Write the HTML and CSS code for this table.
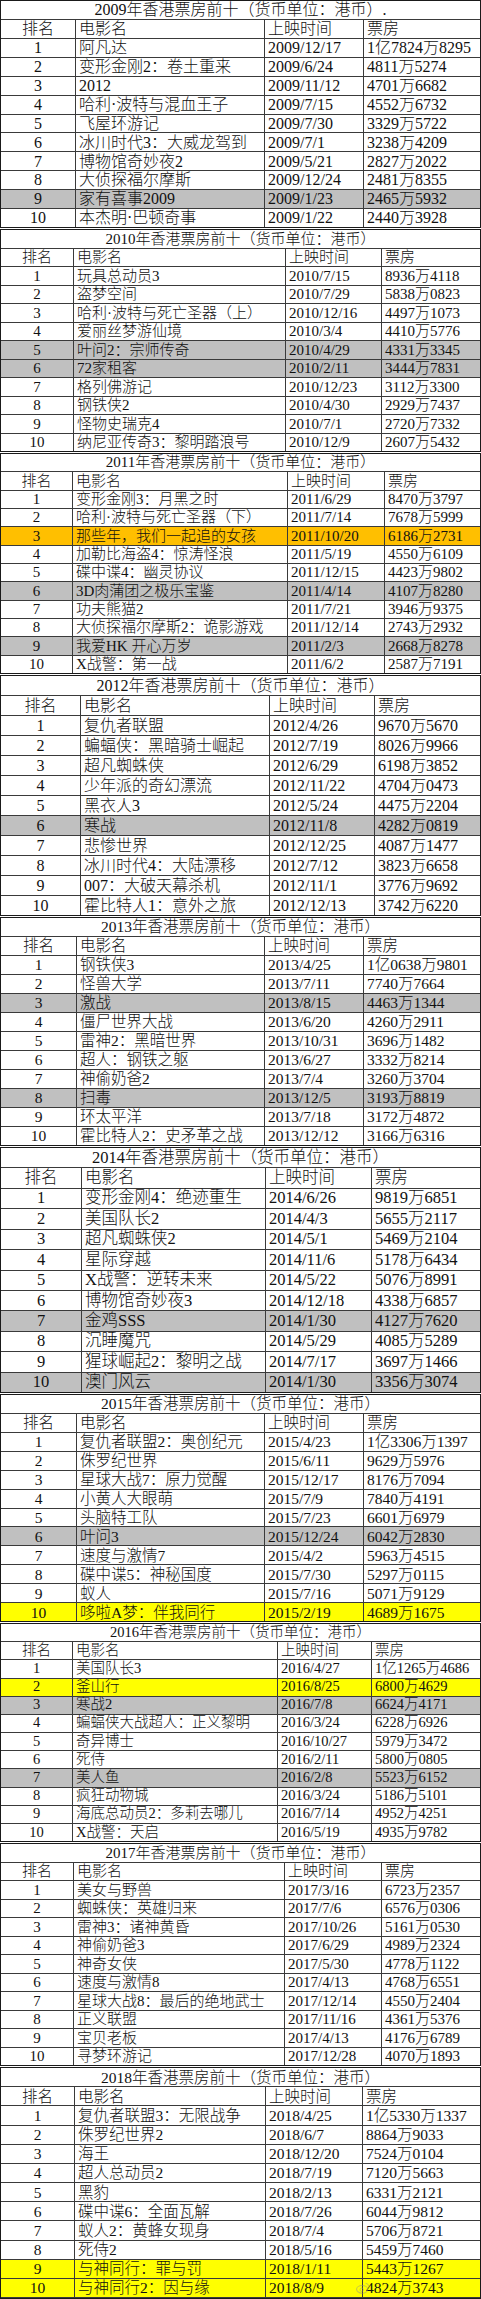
FILE: index.html
```html
<!DOCTYPE html>
<html lang="zh-CN">
<head>
<meta charset="utf-8">
<title>香港票房前十 2009-2018</title>
<link rel="stylesheet" href="styles.css">
</head>
<body>
<main class="page">

<section class="board y2009">
  <div class="title">2009年香港票房前十（货币单位：港币）.</div>
  <div class="row"><span>排名</span><span>电影名</span><span>上映时间</span><span>票房</span></div>
  <div class="row"><span>1</span><span>阿凡达</span><span>2009/12/17</span><span>1亿7824万8295</span></div>
  <div class="row"><span>2</span><span>变形金刚2：卷土重来</span><span>2009/6/24</span><span>4811万5274</span></div>
  <div class="row"><span>3</span><span>2012</span><span>2009/11/12</span><span>4701万6682</span></div>
  <div class="row"><span>4</span><span>哈利·波特与混血王子</span><span>2009/7/15</span><span>4552万6732</span></div>
  <div class="row"><span>5</span><span>飞屋环游记</span><span>2009/7/30</span><span>3329万5722</span></div>
  <div class="row"><span>6</span><span>冰川时代3：大威龙驾到</span><span>2009/7/1</span><span>3238万4209</span></div>
  <div class="row"><span>7</span><span>博物馆奇妙夜2</span><span>2009/5/21</span><span>2827万2022</span></div>
  <div class="row"><span>8</span><span>大侦探福尔摩斯</span><span>2009/12/24</span><span>2481万8355</span></div>
  <div class="row grey"><span>9</span><span>家有喜事2009</span><span>2009/1/23</span><span>2465万5932</span></div>
  <div class="row"><span>10</span><span>本杰明·巴顿奇事</span><span>2009/1/22</span><span>2440万3928</span></div>
</section>

<section class="board y2010">
  <div class="title">2010年香港票房前十（货币单位：港币）</div>
  <div class="row"><span>排名</span><span>电影名</span><span>上映时间</span><span>票房</span></div>
  <div class="row"><span>1</span><span>玩具总动员3</span><span>2010/7/15</span><span>8936万4118</span></div>
  <div class="row"><span>2</span><span>盗梦空间</span><span>2010/7/29</span><span>5838万0823</span></div>
  <div class="row"><span>3</span><span>哈利·波特与死亡圣器（上）</span><span>2010/12/16</span><span>4497万1073</span></div>
  <div class="row"><span>4</span><span>爱丽丝梦游仙境</span><span>2010/3/4</span><span>4410万5776</span></div>
  <div class="row grey"><span>5</span><span>叶问2：宗师传奇</span><span>2010/4/29</span><span>4331万3345</span></div>
  <div class="row grey"><span>6</span><span>72家租客</span><span>2010/2/11</span><span>3444万7831</span></div>
  <div class="row"><span>7</span><span>格列佛游记</span><span>2010/12/23</span><span>3112万3300</span></div>
  <div class="row"><span>8</span><span>钢铁侠2</span><span>2010/4/30</span><span>2929万7437</span></div>
  <div class="row"><span>9</span><span>怪物史瑞克4</span><span>2010/7/1</span><span>2720万7332</span></div>
  <div class="row"><span>10</span><span>纳尼亚传奇3：黎明踏浪号</span><span>2010/12/9</span><span>2607万5432</span></div>
</section>

<section class="board y2011">
  <div class="title">2011年香港票房前十（货币单位：港币）</div>
  <div class="row"><span>排名</span><span>电影名</span><span>上映时间</span><span>票房</span></div>
  <div class="row"><span>1</span><span>变形金刚3：月黑之时</span><span>2011/6/29</span><span>8470万3797</span></div>
  <div class="row"><span>2</span><span>哈利·波特与死亡圣器（下）</span><span>2011/7/14</span><span>7678万5999</span></div>
  <div class="row orange"><span>3</span><span>那些年，我们一起追的女孩</span><span>2011/10/20</span><span>6186万2731</span></div>
  <div class="row"><span>4</span><span>加勒比海盗4：惊涛怪浪</span><span>2011/5/19</span><span>4550万6109</span></div>
  <div class="row"><span>5</span><span>碟中谍4：幽灵协议</span><span>2011/12/15</span><span>4423万9802</span></div>
  <div class="row grey"><span>6</span><span>3D肉蒲团之极乐宝鉴</span><span>2011/4/14</span><span>4107万8280</span></div>
  <div class="row"><span>7</span><span>功夫熊猫2</span><span>2011/7/21</span><span>3946万9375</span></div>
  <div class="row"><span>8</span><span>大侦探福尔摩斯2：诡影游戏</span><span>2011/12/14</span><span>2743万2932</span></div>
  <div class="row grey"><span>9</span><span>我爱HK 开心万岁</span><span>2011/2/3</span><span>2668万8278</span></div>
  <div class="row"><span>10</span><span>X战警：第一战</span><span>2011/6/2</span><span>2587万7191</span></div>
</section>

<section class="board y2012">
  <div class="title">2012年香港票房前十（货币单位：港币）</div>
  <div class="row"><span>排名</span><span>电影名</span><span>上映时间</span><span>票房</span></div>
  <div class="row"><span>1</span><span>复仇者联盟</span><span>2012/4/26</span><span>9670万5670</span></div>
  <div class="row"><span>2</span><span>蝙蝠侠：黑暗骑士崛起</span><span>2012/7/19</span><span>8026万9966</span></div>
  <div class="row"><span>3</span><span>超凡蜘蛛侠</span><span>2012/6/29</span><span>6198万3852</span></div>
  <div class="row"><span>4</span><span>少年派的奇幻漂流</span><span>2012/11/22</span><span>4704万0473</span></div>
  <div class="row"><span>5</span><span>黑衣人3</span><span>2012/5/24</span><span>4475万2204</span></div>
  <div class="row grey"><span>6</span><span>寒战</span><span>2012/11/8</span><span>4282万0819</span></div>
  <div class="row"><span>7</span><span>悲惨世界</span><span>2012/12/25</span><span>4087万1477</span></div>
  <div class="row"><span>8</span><span>冰川时代4：大陆漂移</span><span>2012/7/12</span><span>3823万6658</span></div>
  <div class="row"><span>9</span><span>007：大破天幕杀机</span><span>2012/11/1</span><span>3776万9692</span></div>
  <div class="row"><span>10</span><span>霍比特人1：意外之旅</span><span>2012/12/13</span><span>3742万6220</span></div>
</section>

<section class="board y2013">
  <div class="title">2013年香港票房前十（货币单位：港币）</div>
  <div class="row"><span>排名</span><span>电影名</span><span>上映时间</span><span>票房</span></div>
  <div class="row"><span>1</span><span>钢铁侠3</span><span>2013/4/25</span><span>1亿0638万9801</span></div>
  <div class="row"><span>2</span><span>怪兽大学</span><span>2013/7/11</span><span>7740万7664</span></div>
  <div class="row grey"><span>3</span><span>激战</span><span>2013/8/15</span><span>4463万1344</span></div>
  <div class="row"><span>4</span><span>僵尸世界大战</span><span>2013/6/20</span><span>4260万2911</span></div>
  <div class="row"><span>5</span><span>雷神2：黑暗世界</span><span>2013/10/31</span><span>3696万1482</span></div>
  <div class="row"><span>6</span><span>超人：钢铁之躯</span><span>2013/6/27</span><span>3332万8214</span></div>
  <div class="row"><span>7</span><span>神偷奶爸2</span><span>2013/7/4</span><span>3260万3704</span></div>
  <div class="row grey"><span>8</span><span>扫毒</span><span>2013/12/5</span><span>3193万8819</span></div>
  <div class="row"><span>9</span><span>环太平洋</span><span>2013/7/18</span><span>3172万4872</span></div>
  <div class="row"><span>10</span><span>霍比特人2：史矛革之战</span><span>2013/12/12</span><span>3166万6316</span></div>
</section>

<section class="board y2014">
  <div class="title">2014年香港票房前十（货币单位：港币）</div>
  <div class="row"><span>排名</span><span>电影名</span><span>上映时间</span><span>票房</span></div>
  <div class="row"><span>1</span><span>变形金刚4：绝迹重生</span><span>2014/6/26</span><span>9819万6851</span></div>
  <div class="row"><span>2</span><span>美国队长2</span><span>2014/4/3</span><span>5655万2117</span></div>
  <div class="row"><span>3</span><span>超凡蜘蛛侠2</span><span>2014/5/1</span><span>5469万2104</span></div>
  <div class="row"><span>4</span><span>星际穿越</span><span>2014/11/6</span><span>5178万6434</span></div>
  <div class="row"><span>5</span><span>X战警：逆转未来</span><span>2014/5/22</span><span>5076万8991</span></div>
  <div class="row"><span>6</span><span>博物馆奇妙夜3</span><span>2014/12/18</span><span>4338万6857</span></div>
  <div class="row grey"><span>7</span><span>金鸡SSS</span><span>2014/1/30</span><span>4127万7620</span></div>
  <div class="row"><span>8</span><span>沉睡魔咒</span><span>2014/5/29</span><span>4085万5289</span></div>
  <div class="row"><span>9</span><span>猩球崛起2：黎明之战</span><span>2014/7/17</span><span>3697万1466</span></div>
  <div class="row grey"><span>10</span><span>澳门风云</span><span>2014/1/30</span><span>3356万3074</span></div>
</section>

<section class="board y2015">
  <div class="title">2015年香港票房前十（货币单位：港币）</div>
  <div class="row"><span>排名</span><span>电影名</span><span>上映时间</span><span>票房</span></div>
  <div class="row"><span>1</span><span>复仇者联盟2：奥创纪元</span><span>2015/4/23</span><span>1亿3306万1397</span></div>
  <div class="row"><span>2</span><span>侏罗纪世界</span><span>2015/6/11</span><span>9629万5976</span></div>
  <div class="row"><span>3</span><span>星球大战7：原力觉醒</span><span>2015/12/17</span><span>8176万7094</span></div>
  <div class="row"><span>4</span><span>小黄人大眼萌</span><span>2015/7/9</span><span>7840万4191</span></div>
  <div class="row"><span>5</span><span>头脑特工队</span><span>2015/7/23</span><span>6601万6979</span></div>
  <div class="row grey"><span>6</span><span>叶问3</span><span>2015/12/24</span><span>6042万2830</span></div>
  <div class="row"><span>7</span><span>速度与激情7</span><span>2015/4/2</span><span>5963万4515</span></div>
  <div class="row"><span>8</span><span>碟中谍5：神秘国度</span><span>2015/7/30</span><span>5297万0115</span></div>
  <div class="row"><span>9</span><span>蚁人</span><span>2015/7/16</span><span>5071万9129</span></div>
  <div class="row yellow"><span>10</span><span>哆啦A梦：伴我同行</span><span>2015/2/19</span><span>4689万1675</span></div>
</section>

<section class="board y2016">
  <div class="title">2016年香港票房前十（货币单位：港币）</div>
  <div class="row"><span>排名</span><span>电影名</span><span>上映时间</span><span>票房</span></div>
  <div class="row"><span>1</span><span>美国队长3</span><span>2016/4/27</span><span>1亿1265万4686</span></div>
  <div class="row yellow"><span>2</span><span>釜山行</span><span>2016/8/25</span><span>6800万4629</span></div>
  <div class="row grey"><span>3</span><span>寒战2</span><span>2016/7/8</span><span>6624万4171</span></div>
  <div class="row"><span>4</span><span>蝙蝠侠大战超人：正义黎明</span><span>2016/3/24</span><span>6228万6926</span></div>
  <div class="row"><span>5</span><span>奇异博士</span><span>2016/10/27</span><span>5979万3472</span></div>
  <div class="row"><span>6</span><span>死侍</span><span>2016/2/11</span><span>5800万0805</span></div>
  <div class="row grey"><span>7</span><span>美人鱼</span><span>2016/2/8</span><span>5523万6152</span></div>
  <div class="row"><span>8</span><span>疯狂动物城</span><span>2016/3/24</span><span>5186万5101</span></div>
  <div class="row"><span>9</span><span>海底总动员2：多莉去哪儿</span><span>2016/7/14</span><span>4952万4251</span></div>
  <div class="row"><span>10</span><span>X战警：天启</span><span>2016/5/19</span><span>4935万9782</span></div>
</section>

<section class="board y2017">
  <div class="title">2017年香港票房前十（货币单位：港币）</div>
  <div class="row"><span>排名</span><span>电影名</span><span>上映时间</span><span>票房</span></div>
  <div class="row"><span>1</span><span>美女与野兽</span><span>2017/3/16</span><span>6723万2357</span></div>
  <div class="row"><span>2</span><span>蜘蛛侠：英雄归来</span><span>2017/7/6</span><span>6576万0306</span></div>
  <div class="row"><span>3</span><span>雷神3：诸神黄昏</span><span>2017/10/26</span><span>5161万0530</span></div>
  <div class="row"><span>4</span><span>神偷奶爸3</span><span>2017/6/29</span><span>4989万2324</span></div>
  <div class="row"><span>5</span><span>神奇女侠</span><span>2017/5/30</span><span>4778万1122</span></div>
  <div class="row"><span>6</span><span>速度与激情8</span><span>2017/4/13</span><span>4768万6551</span></div>
  <div class="row"><span>7</span><span>星球大战8：最后的绝地武士</span><span>2017/12/14</span><span>4550万2404</span></div>
  <div class="row"><span>8</span><span>正义联盟</span><span>2017/11/16</span><span>4361万5376</span></div>
  <div class="row"><span>9</span><span>宝贝老板</span><span>2017/4/13</span><span>4176万6789</span></div>
  <div class="row"><span>10</span><span>寻梦环游记</span><span>2017/12/28</span><span>4070万1893</span></div>
</section>

<section class="board y2018">
  <div class="title">2018年香港票房前十（货币单位：港币）</div>
  <div class="row"><span>排名</span><span>电影名</span><span>上映时间</span><span>票房</span></div>
  <div class="row"><span>1</span><span>复仇者联盟3：无限战争</span><span>2018/4/25</span><span>1亿5330万1337</span></div>
  <div class="row"><span>2</span><span>侏罗纪世界2</span><span>2018/6/7</span><span>8864万9033</span></div>
  <div class="row"><span>3</span><span>海王</span><span>2018/12/20</span><span>7524万0104</span></div>
  <div class="row"><span>4</span><span>超人总动员2</span><span>2018/7/19</span><span>7120万5663</span></div>
  <div class="row"><span>5</span><span>黑豹</span><span>2018/2/13</span><span>6331万2121</span></div>
  <div class="row"><span>6</span><span>碟中谍6：全面瓦解</span><span>2018/7/26</span><span>6044万9812</span></div>
  <div class="row"><span>7</span><span>蚁人2：黄蜂女现身</span><span>2018/7/4</span><span>5706万8721</span></div>
  <div class="row"><span>8</span><span>死侍2</span><span>2018/5/16</span><span>5459万7460</span></div>
  <div class="row yellow"><span>9</span><span>与神同行：罪与罚</span><span>2018/1/11</span><span>5443万1267</span></div>
  <div class="row yellow"><span>10</span><span>与神同行2：因与缘</span><span>2018/8/9</span><span>4824万3743</span></div>
  <div class="watermark" aria-hidden="true">
    <svg class="wm-logo" viewBox="0 0 16 14" width="14" height="12">
      <ellipse cx="7" cy="8.5" rx="6.5" ry="4.5" fill="none" stroke="currentColor" stroke-width="1.2"/>
      <circle cx="6.5" cy="9" r="2" fill="none" stroke="currentColor" stroke-width="1"/>
      <path d="M11 1.5a3.5 3.5 0 0 1 3.5 3.5" fill="none" stroke="currentColor" stroke-width="1.1"/>
    </svg>
  </div>
</section>

</main>
</body>
</html>
```

FILE: styles.css
```css
html, body {
  margin: 0;
  padding: 0;
  background: #ffffff;
}

.page {
  width: 481px;
  display: flex;
  flex-direction: column;
  gap: 1px;
  font-family: "Liberation Serif", "Noto Sans CJK SC", serif;
  font-weight: 300;
  color: #111;
}

.board {
  position: relative;
  box-sizing: border-box;
  display: flex;
  flex-direction: column;
  height: var(--h);
  border: 1px solid #1a1a1a;
  font-size: var(--fs);
  line-height: 1.1;
}

.title,
.row {
  flex: 1 1 0;
  min-height: 0;
  box-sizing: border-box;
  border-bottom: 1px solid #3a3a3a;
}

.row:last-of-type {
  border-bottom: 0;
}

.title {
  display: flex;
  align-items: center;
  justify-content: center;
  white-space: nowrap;
}

.row {
  display: grid;
  grid-template-columns: var(--c1) var(--c2) var(--c3) 1fr;
}

.row span {
  display: flex;
  align-items: center;
  padding: 0 0 0 3px;
  border-right: 1px solid #3a3a3a;
  white-space: nowrap;
  min-width: 0;
}

.row span:first-child {
  justify-content: center;
  padding-left: 0;
}

.row span:last-child {
  border-right: 0;
}

.grey { background: #c0c0c0; }
.orange { background: #ffbf00; }
.yellow { background: #ffff00; }

/* per-year geometry */
.y2009 { --h: 228px; --fs: 16px;   --c1: 75px; --c2: 189px; --c3: 99px; }
.y2010 { --h: 223px; --fs: 15px;   --c1: 73px; --c2: 212px; --c3: 96px; }
.y2011 { --h: 221px; --fs: 15px;   --c1: 72px; --c2: 215px; --c3: 97px; }
.y2012 { --h: 241px; --fs: 16px;   --c1: 80px; --c2: 189px; --c3: 105px; }
.y2013 { --h: 229px; --fs: 15.5px; --c1: 76px; --c2: 188px; --c3: 99px; }
.y2014 { --h: 246px; --fs: 16.5px; --c1: 81px; --c2: 184px; --c3: 106px; }
.y2015 { --h: 228px; --fs: 15.5px; --c1: 76px; --c2: 188px; --c3: 99px; }
.y2016 { --h: 219px; --fs: 14.5px; --c1: 72px; --c2: 205px; --c3: 94px; }
.y2017 { --h: 223px; --fs: 15px;   --c1: 73px; --c2: 211px; --c3: 97px; }
.y2018 { --h: 232px; --fs: 15.5px; --c1: 74px; --c2: 191px; --c3: 97px; }

.watermark {
  position: absolute;
  right: 110px;
  bottom: 4px;
  color: rgba(140, 140, 140, 0.5);
  pointer-events: none;
}

.wm-logo {
  display: block;
}
```
